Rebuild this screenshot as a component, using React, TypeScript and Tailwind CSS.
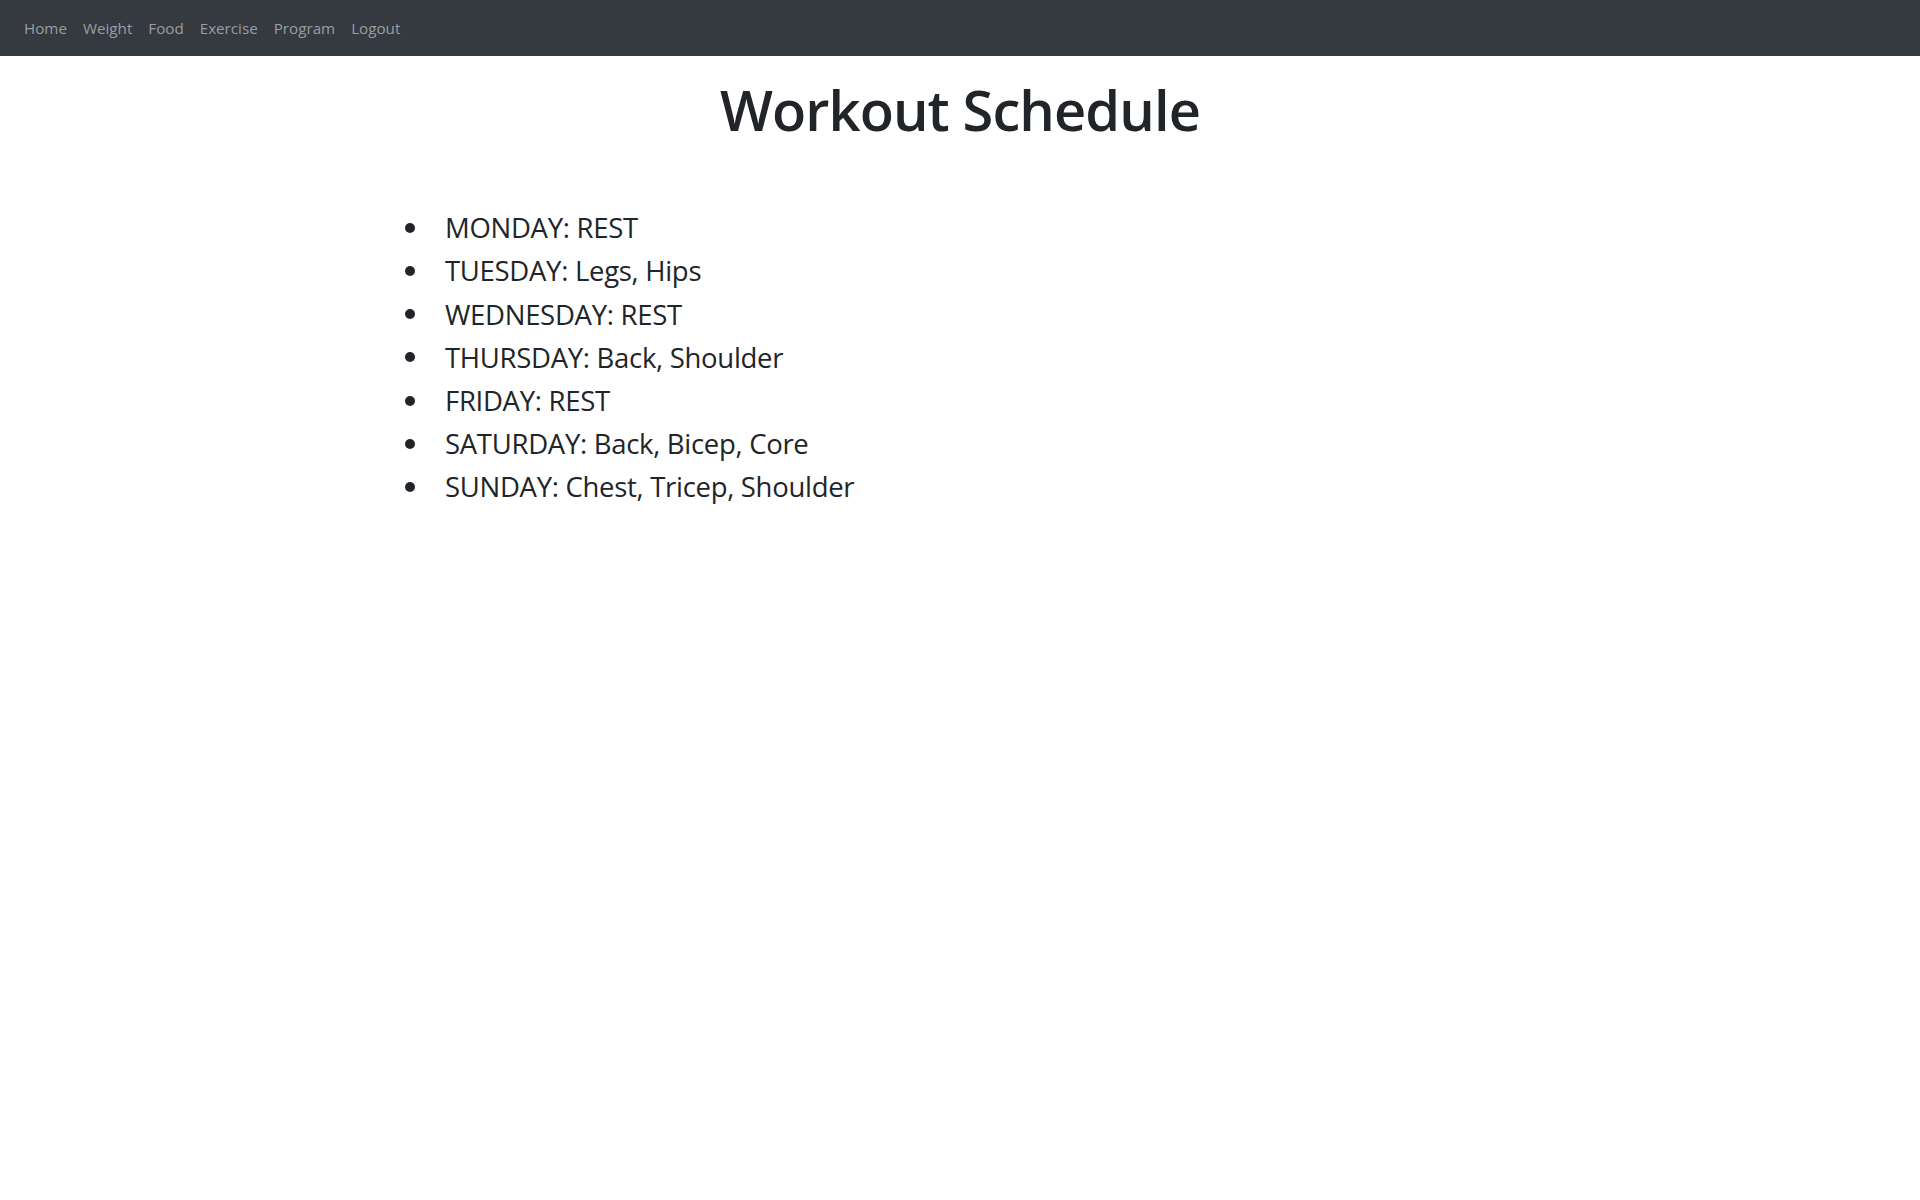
import React from "react";

const items = [
  "MONDAY: REST",
  "TUESDAY: Legs, Hips",
  "WEDNESDAY: REST",
  "THURSDAY: Back, Shoulder",
  "FRIDAY: REST",
  "SATURDAY: Back, Bicep, Core",
  "SUNDAY: Chest, Tricep, Shoulder",
];

export default function App() {
  return (
    <div className="min-h-[1200px] bg-white text-[#212529]" style={{ fontFamily: '"Open Sans", "Noto Sans", sans-serif' }}>
      <nav className="bg-[#343a40] h-[56px] flex items-center px-4">
        <ul className="flex">
          {["Home", "Weight", "Food", "Exercise", "Program", "Logout"].map((l) => (
            <li key={l}>
              <a className="px-2 text-[15.2px] leading-6 text-[#9a9da0]">{l}</a>
            </li>
          ))}
        </ul>
      </nav>
      <div className="w-[1140px] mx-auto px-[15px]">
        <h1 className="text-center text-[56px] font-semibold leading-[1.2] mt-[20px] tracking-[-0.9px]">Workout Schedule</h1>
        <ul className="mt-[63px] text-[27.5px] leading-[43.2px] tracking-[-0.3px]">
          {items.map((i) => (
            <li key={i} className="flex items-center">
              <span className="w-[10px] h-[10px] rounded-full bg-[#212529] shrink-0 mr-[30px]" />
              <span>{i}</span>
            </li>
          ))}
        </ul>
      </div>
    </div>
  );
}
